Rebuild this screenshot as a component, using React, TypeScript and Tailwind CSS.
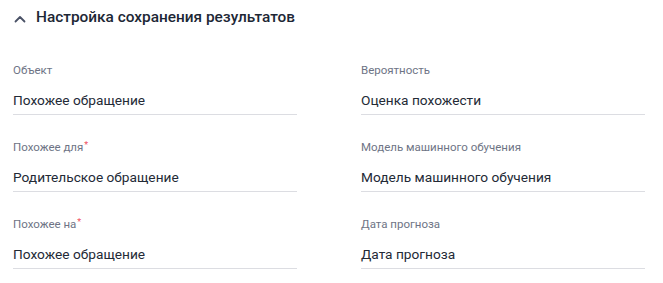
import React from 'react'

type Field = { label: string; value: string; required?: boolean }

const rows: Field[][] = [
  [
    { label: 'Объект', value: 'Похожее обращение' },
    { label: 'Вероятность', value: 'Оценка похожести' },
  ],
  [
    { label: 'Похожее для', value: 'Родительское обращение', required: true },
    { label: 'Модель машинного обучения', value: 'Модель машинного обучения' },
  ],
  [
    { label: 'Похожее на', value: 'Похожее обращение', required: true },
    { label: 'Дата прогноза', value: 'Дата прогноза' },
  ],
]

function FieldView({ field }: { field: Field }) {
  return (
    <div className="flex flex-col">
      <div className="flex items-start h-4 text-[11.5px] leading-4 text-[#6e7485]">
        <span>{field.label}</span>
        {field.required && <span className="text-[#f0505f] text-[9px] leading-3 ml-[1px]">*</span>}
      </div>
      <div className="mt-3 pb-1 border-b border-[#dcdde2] text-[13.7px] leading-5 text-[#232a36]">
        {field.value}
      </div>
    </div>
  )
}

export default function App() {
  return (
    <div className="w-[663px] h-[283px] bg-white font-['Roboto',sans-serif]">
      {/* Section header */}
      <div className="flex items-center h-[35px] pl-[14px]">
        <svg width="12" height="8" viewBox="0 0 12 8" className="mt-[2px]">
          <path d="M1.5 6.5 L6 2 L10.5 6.5" fill="none" stroke="#4a5266" strokeWidth="1.8" strokeLinecap="round" strokeLinejoin="round" />
        </svg>
        <h2 className="ml-[10px] text-[15.4px] font-medium text-[#1d2735]">
          Настройка сохранения результатов
        </h2>
      </div>

      {/* Fields */}
      <div className="flex flex-col gap-6 pl-[13px] pr-[18px] pt-[27px]">
        {rows.map((row, i) => (
          <div key={i} className="grid grid-cols-2 gap-x-16">
            {row.map((f) => (
              <FieldView key={f.label} field={f} />
            ))}
          </div>
        ))}
      </div>
    </div>
  )
}
